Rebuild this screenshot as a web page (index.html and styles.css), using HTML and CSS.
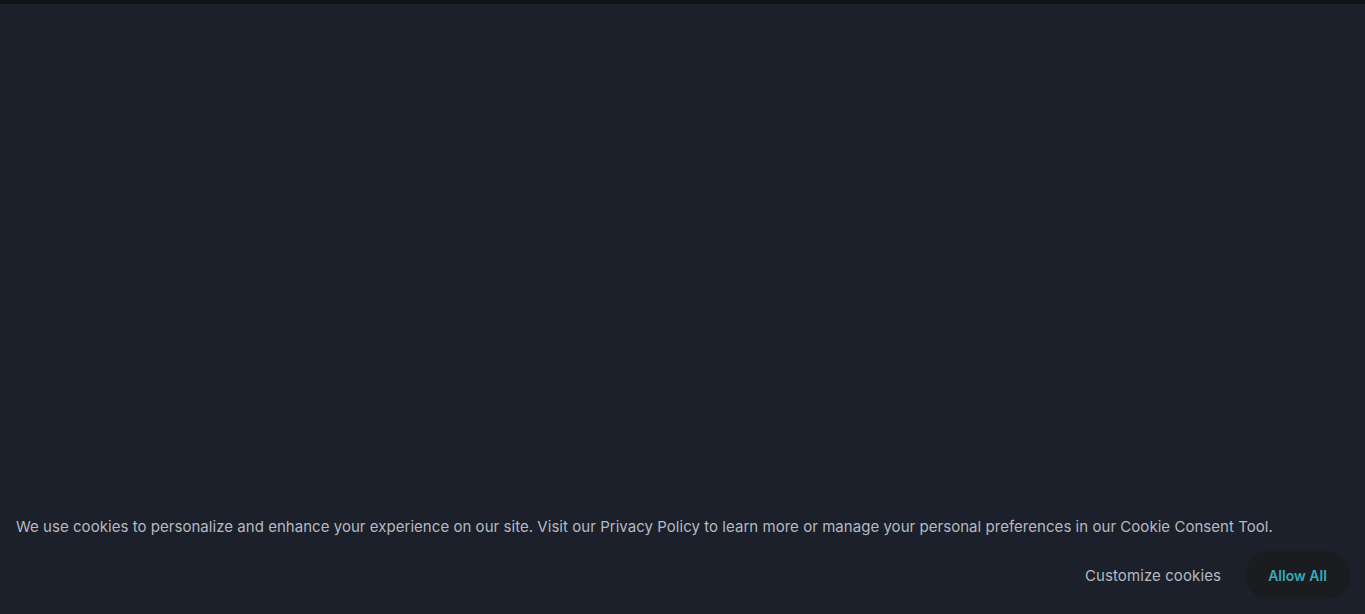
FILE: index.html
```html
<!DOCTYPE html>
<html lang="en">
<head>
<meta charset="utf-8">
<title>Cookies</title>
<link rel="stylesheet" href="styles.css">
</head>
<body>
<div class="topbar"></div>
<main class="page"></main>
<section class="consent">
  <p class="consent-text">We use cookies to personalize and enhance your experience on our site. Visit our Privacy Policy to learn more or manage your personal preferences in our Cookie Consent Tool.</p>
  <div class="consent-actions">
    <button class="btn-link">Customize cookies</button>
    <button class="btn-allow">Allow All</button>
  </div>
</section>
</body>
</html>
```
FILE: styles.css
```css
html, body {
  margin: 0;
  height: 100%;
}
body {
  background: #1b202b;
  font-family: "Inter", "Liberation Sans", sans-serif;
  display: flex;
  flex-direction: column;
  overflow: hidden;
}
.topbar {
  height: 4px;
  background: #0f1216;
  flex: none;
}
.page {
  flex: 1;
}
.consent {
  padding: 0 15px 15px 16px;
}
.consent-text {
  margin: 0;
  color: #b6bac0;
  font-size: 15px;
  line-height: 24px;
  letter-spacing: 0.04px;
}
.consent-actions {
  display: flex;
  justify-content: flex-end;
  align-items: center;
  gap: 24px;
  margin-top: 12px;
}
.btn-link {
  background: none;
  border: none;
  color: #b6bac0;
  font-family: inherit;
  font-size: 15px;
  letter-spacing: 0.1px;
  padding: 0;
}
.btn-allow {
  background: #1a1c1f;
  border: none;
  border-radius: 24px;
  height: 48px;
  width: 105px;
  color: #3aa9b8;
  font-family: inherit;
  font-size: 14px;
  font-weight: 600;
}
```
